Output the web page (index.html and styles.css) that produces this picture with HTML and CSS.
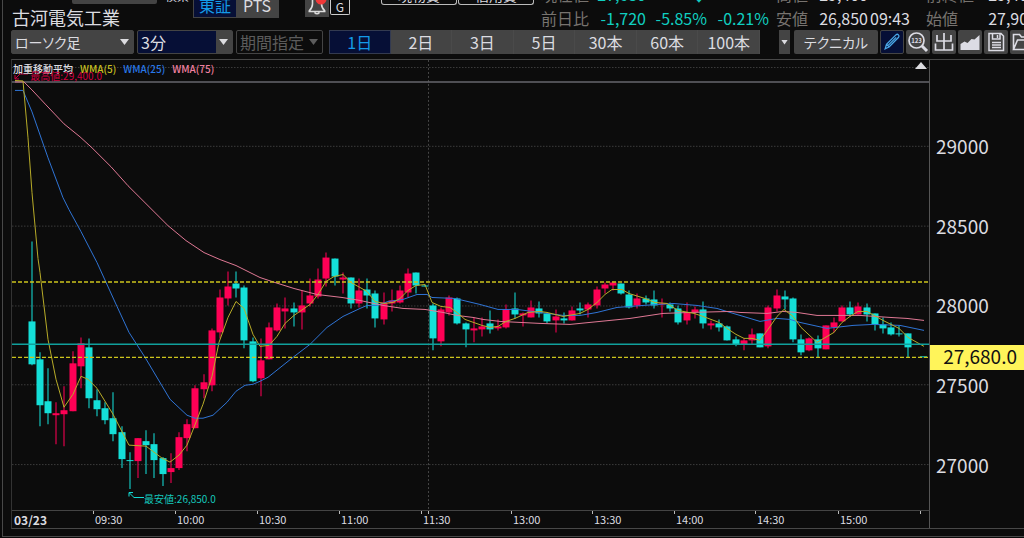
FILE: index.html
```
<!DOCTYPE html>
<html lang="ja">
<head>
<meta charset="utf-8">
<title>古河電気工業</title>
<link rel="stylesheet" href="styles.css">
</head>
<body>
<main class="window">
  <header class="header">
    <div class="ident">
      <div class="ident-strip"><span class="code-box"></span><span class="clipped">検索</span></div>
      <h1 class="name">古河電気工業</h1>
    </div>
    <div class="markets">
      <button class="market market-on">東証</button>
      <button class="market">PTS</button>
    </div>
    <button class="bell" aria-label="アラート">
      <svg viewBox="0 0 24 17" width="24" height="17"><path d="M7.500 0v4q0 4-3.500 7M16.500 0v4q0 4 3.500 7M3.500 11.500h17M9.500 12.500q2.500 2.500 5 0" fill="none" stroke="#ddd" stroke-width="1.600"/><circle cx="16" cy="-1" r="5.500" fill="#f03838"/></svg>
    </button>
    <button class="group">G</button>
    <div class="orders">
      <button class="order"><span>現物買</span></button>
      <button class="order"><span>信用買</span></button>
    </div>
    <div class="quotes">
      <span class="label">現在値</span><span class="num down">27,680</span><span class="num down">↓</span><span></span><span class="label second">高値</span><span class="num">29,400</span><span></span><span class="label third">前終値</span><span class="num">29,400</span>
      <span class="label">前日比</span><span class="num down">-1,720</span><span class="num down">-5.85%</span><span class="num down">-0.21%</span><span class="label second">安値</span><span class="num">26,850</span><span class="num">09:43</span><span class="label third">始値</span><span class="num">27,900</span>
    </div>
  </header>

  <nav class="toolbar">
    <div class="drop drop-type"><select aria-label="チャート種類"><option>ローソク足</option></select></div>
    <div class="drop drop-span"><select aria-label="足種"><option>3分</option></select></div>
    <div class="drop drop-range"><select aria-label="期間指定" disabled><option>期間指定</option></select></div>
    <div class="periods">
      <button class="period period-on">1日</button><button class="period">2日</button><button class="period">3日</button><button class="period">5日</button><button class="period">30本</button><button class="period">60本</button><button class="period">100本</button>
    </div>
    <button class="more" aria-label="その他"></button>
    <button class="technical">テクニカル</button>
    <div class="tools">
      <button class="tool tool-on" aria-label="描画"><svg viewBox="0 0 24 24"><path d="M4.500 19.500l1.500-5L16.500 4q1.300-1 2.500.2t.2 2.600L8.800 17.500zM6 14.500l3 3M7.500 16l9-9" fill="none" stroke="#4aa8e8" stroke-width="1.400"/></svg></button>
      <button class="tool" aria-label="数値照会"><svg viewBox="0 0 24 24"><circle cx="10.500" cy="10.500" r="7.500" fill="none" stroke="#dcdce4" stroke-width="1.700"/><path d="M16 16l5 5" stroke="#dcdce4" stroke-width="3"/><text x="10.500" y="13" text-anchor="middle" class="tiny">123</text></svg></button>
      <button class="tool" aria-label="出来高"><svg viewBox="0 0 24 24"><path d="M12 3v17M5 5v6h14V5M3.500 13.500V20h17v-6.500" fill="none" stroke="#dcdce4" stroke-width="1.700"/></svg></button>
      <button class="tool" aria-label="エリア"><svg viewBox="0 0 24 24"><path d="M2.500 20v-6l4-2.500 3 1.500 4-4 3 .5L21.500 5v15z" fill="#dcdce4"/></svg></button>
      <button class="tool" aria-label="保存"><svg viewBox="0 0 24 24"><path d="M5 3.500h12l2.500 2.500v14.500H5zM8.500 3.500V9H16V3.500M13.500 5v3M8 12.500h9M8 15h9M8 17.500h9" fill="none" stroke="#dcdce4" stroke-width="1.500"/></svg></button>
      <button class="tool" aria-label="開く"><svg viewBox="0 0 24 24"><path d="M3.500 19.500V4.500h6l2 2.500h9v3M3.500 19.500l4-9.500H23l-4 9.500z" fill="none" stroke="#dcdce4" stroke-width="1.600"/></svg></button>
    </div>
  </nav>

  <section class="panel">
    <div class="plot">
      <svg id="chart" class="chart" viewBox="12 60 917 451" preserveAspectRatio="none" role="img" aria-label="3分足チャート"></svg>
      <div class="legend"><span>加重移動平均</span><span class="wma5">WMA(5)</span><span class="wma25">WMA(25)</span><span class="wma75">WMA(75)</span></div>
      <span class="mark-high">最高値:29,400.0</span>
      <span class="mark-low">最安値:26,850.0</span>
      <button class="collapse" aria-label="折りたたむ"></button>
    </div>
    <div class="prices" id="prices"><span class="last">27,680.0</span></div>
    <div class="times" id="times"><b class="date">03/23</b></div>
    <div class="corner"></div>
  </section>
</main>
<script src="chart.js"></script>
</body>
</html>
```
FILE: styles.css
```
* { box-sizing: border-box; }
body {
  margin: 0;
  background: #0a0a0a;
  color: #dcdce0;
  font: 16px/22px "Noto Sans CJK JP", "Noto Sans", sans-serif;
  overflow: hidden;
}
button, select {
  font: inherit;
  color: inherit;
  border: 0;
  margin: 0;
  padding: 0;
  background: #444;
  white-space: nowrap;
}
.window {
  display: flex;
  flex-direction: column;
  height: calc(100vh - 1px);
  margin-left: 2px;
  border-left: 1px solid #484848;
  border-bottom: 1px solid #484848;
  background: #0c0c0c;
}

.header {
  display: flex;
  align-items: flex-start;
  height: 30px;
  padding-left: 9px;
  overflow: hidden;
  flex: none;
}
.ident { width: 181px; flex: none; }
.ident-strip {
  display: flex;
  align-items: flex-end;
  gap: 8px;
  height: 4px;
  padding-left: 60px;
  overflow: hidden;
}
.code-box { width: 85px; height: 8px; background: #444; border-radius: 2px; flex: none; }
.clipped { font-size: 12px; line-height: 16px; height: 16px; }
.name { margin: 2px 0 0; font-size: 18px; line-height: 22px; font-weight: 400; }
.markets { display: flex; width: 86px; height: 18px; border: 1px solid #444; border-top: 0; flex: none; }
.market { flex: 1; height: 17px; line-height: 11px; padding-bottom: 6px; }
.market-on { background: #060f36; color: #149be8; }
.bell { width: 24px; height: 17px; margin-left: 26px; flex: none; }
.bell svg { display: block; }
.group {
  width: 20px;
  height: 15px;
  margin-left: 1px;
  border: 1px solid #ccc;
  border-top: 0;
  border-radius: 0 0 2px 2px;
  background: transparent;
  font-size: 12px;
  line-height: 12px;
  flex: none;
}
.orders { display: flex; gap: 1px; margin-left: 31px; flex: none; }
.order {
  display: flex;
  align-items: flex-end;
  justify-content: center;
  width: 76px;
  height: 5px;
  border: 1px solid #bbb;
  border-top: 0;
  border-radius: 0 0 3px 3px;
  background: transparent;
  overflow: hidden;
}
.order span { font-size: 14px; line-height: 14px; height: 16px; }
.quotes {
  display: grid;
  grid-template-columns: 54px 51px 61px 62px 44px 55px 42px 64px 63px;
  row-gap: 2px;
  margin: -17px 0 0 7px;
  line-height: 22px;
  flex: none;
}
.label { color: #77736f; }
.second { padding-left: 7px; }
.third { padding-left: 16px; }
.num { text-align: right; }
.down { color: #10cfc0; }

.toolbar {
  display: flex;
  height: 24px;
  margin-left: 8px;
  flex: none;
  overflow: hidden;
}
.drop { position: relative; margin-right: 3px; flex: none; }
.drop select {
  appearance: none;
  width: 100%;
  height: 24px;
  padding-left: 3px;
  border-radius: 2px;
  border: 1px solid #444;
}
.drop::after {
  content: "";
  position: absolute;
  right: 5px;
  top: 9px;
  width: 9px;
  height: 6px;
  background: #dcdce0;
  clip-path: polygon(0 0, 100% 0, 50% 100%);
  pointer-events: none;
}
.drop-type { width: 123px; }
.drop-type select { font-size: 14px; font-feature-settings: "palt"; }
.drop-span { width: 96px; }
.drop-span select { background: linear-gradient(to left, #444 16px, #060f36 16px); }
.drop-range { width: 87px; margin-right: 6px; }
.drop-range select { background: #0c0c0c; color: #5c5c5c; opacity: 1; }
.drop-range::after { background: #5c5c5c; }
.periods { display: grid; grid-template-columns: repeat(7, 1fr); width: 431px; flex: none; }
.period { border-right: 1px solid #4a4a4a; }
.period-on { background: #060f36; color: #149be8; border: 1px solid #333a50; }
.more { width: 11px; margin-left: 19px; flex: none; }
.more::after {
  content: "";
  display: block;
  width: 7px;
  height: 5px;
  margin: 0 auto;
  background: #dcdce0;
  clip-path: polygon(0 0, 100% 0, 50% 100%);
}
.technical { width: 84px; margin: 0 2px 0 4px; border-radius: 2px; font-size: 14px; font-feature-settings: "palt"; flex: none; }
.tools { display: flex; gap: 2px; flex: 1 0 auto; }
.tool { width: 24px; height: 24px; border-radius: 2px; overflow: hidden; flex: none; }
.tool svg { display: block; width: 24px; height: 24px; }
.tool-on { background: #060f36; border: 1px solid #444; }
.tool-on svg { width: 22px; height: 22px; }
.tiny { font-size: 6px; font-weight: 700; fill: #dcdce4; }

.panel {
  display: grid;
  grid-template-columns: 1fr 94px;
  grid-template-rows: 1fr 17px;
  flex: 1;
  min-height: 0;
  margin: 5px 0 7px 8px;
  border: 1px solid #484848;
  border-left-color: #333;
  border-right: 0;
}
.plot { position: relative; min-height: 0; border-right: 1px solid #555; border-bottom: 1px solid #444; }
.chart { position: absolute; inset: 0; width: 100%; height: 100%; }
.legend {
  position: absolute;
  left: 1px;
  top: 2px;
  display: flex;
  gap: 7px;
  font-size: 10px;
  line-height: 14px;
  font-weight: 500;
}
.wma5 { color: #c8c020; }
.wma25 { color: #2878e8; }
.wma75 { color: #f080a0; }
.mark-high, .mark-low { position: absolute; font-size: 10px; line-height: 12px; }
.mark-high { left: 2%; top: 10px; color: #d00040; }
.mark-low { left: 14.4%; top: 96.2%; color: #14c8bc; }
.collapse {
  position: absolute;
  right: 2px;
  top: 2px;
  width: 12px;
  height: 7px;
  background: #dcdce0;
  clip-path: polygon(50% 0, 100% 100%, 0 100%);
}
.prices { position: relative; font-size: 19px; line-height: 22px; }
.price { position: absolute; left: 6px; transform: translateY(-50%); }
.last {
  position: absolute;
  z-index: 1;
  left: 0;
  right: 0;
  top: 63.2%;
  padding: 0 7px 3px 0;
  text-align: right;
  background: #fff45a;
  color: #111;
}
.times { position: relative; font-size: 11px; line-height: 17px; border-right: 1px solid #555; }
.date { padding-left: 2px; font-size: 12px; }
.time { position: absolute; top: 0; padding-left: 2px; }
.time::before { content: ""; position: absolute; left: 0; top: 0; width: 1px; height: 3px; background: #bbb; }
.time-major::before { display: none; }
```
FILE: chart.js
```
const TEAL = "#14dfd8", RED = "#ff0055";
const PITCH = 8.187, FIRST_X = 31.6;

// high, body top, body bottom, low, direction
const candles = `242 322 365 366 T|353 360 406 427 T|369 402 414 425 T|403 414 416 445 R|387 411 415 447 R|352 364 412 412 R|338 344 367 389 R|339 348 399 409 T|390 401 410 417 T|403 409 421 425 T|393 419 435 442 T|427 433 460 469 T|453 461 462 490 T|439 439 462 479 R|431 442 446 475 T|434 445 461 479 T|458 459 475 487 T|454 469 473 484 R|433 438 469 471 R|420 425 439 452 R|386 389 429 429 R|375 383 390 399 R|329 331 386 392 R|290 298 333 339 R|272 287 299 306 R|272 284 289 298 T|286 288 341 349 T|338 342 382 383 T|339 361 379 397 R|323 328 360 360 R|304 308 331 332 R|298 309 312 329 R|303 309 313 327 T|291 306 313 330 R|279 296 304 307 R|269 280 297 299 R|253 258 279 287 R|259 259 277 286 T|273 278 280 294 R|278 278 304 309 T|279 291 304 308 R|279 290 296 309 T|291 294 319 328 T|293 303 320 325 R|290 301 304 312 R|286 291 303 304 R|269 274 293 298 R|273 273 286 294 T|285 286 287 287 T|304 306 339 351 T|308 310 342 347 R|296 298 313 316 R|298 299 324 325 T|323 324 330 348 T|318 329 331 343 R|318 327 330 337 R|311 324 330 334 T|320 327 329 331 R|305 310 328 329 R|293 309 315 319 T|313 314 316 327 R|301 308 318 318 R|302 309 314 318 T|313 314 322 324 T|310 317 321 333 R|313 319 321 324 T|307 311 321 321 R|303 309 311 315 T|303 305 310 318 R|287 290 306 309 R|283 285 289 294 R|282 283 286 291 R|284 284 294 295 T|291 295 308 309 T|294 299 306 309 R|296 299 303 305 T|291 300 306 309 T|299 304 305 318 R|303 305 309 312 T|306 309 323 325 T|303 313 321 325 R|307 310 313 319 R|302 310 324 329 T|321 324 326 330 R|320 324 328 332 T|326 327 341 341 T|337 340 345 347 T|339 341 345 351 R|329 335 341 345 R|334 334 348 348 T|306 308 347 349 R|290 296 309 312 R|291 297 300 310 T|298 299 340 343 T|335 340 353 356 T|338 339 351 352 R|336 340 349 358 T|326 326 350 350 R|318 323 328 333 R|306 308 322 322 R|302 308 315 317 T|303 307 315 315 R|304 308 315 322 T|314 314 325 331 T|318 325 329 334 T|323 328 335 336 T|326 334 335 337 T|334 334 348 358 T`
  .split("|").map(s => s.split(" "));

const wma75 = "15,82 24,82 32,90 46,105 64,124 80,137 92,148 111,167 128,186 149,207 168,226 186,241 204,253 220,260 236,266 260,278 275,283 294,289 317,295 342,298 360,301 383,306 403,309 425,310 443,313 457,316 473,318 483,320 500,322 540,324 570,325 590,323 630,319 663,314 690,313 730,312 740,313 767,314 783,312 797,313 817,316 860,316 890,318 907,319 924,321";
const wma25 = "15,90.5 23,90.5 32,112 48,158 63,198 69,210 81,232 97,263 117,307 129,333 145,358 170,400 187,416 195,419 203,419 213,416 227,403 236,392 245,386 253,385 260,382 268,378 293,358 310,345 327,328 343,317 360,309 367,306 377,306 388,302 403,300 417,295 427,295 432,298 455,299 480,305 498,310 517,310 540,313 563,316 580,316 597,313 617,308 643,306 673,304 697,306 717,309 730,313 760,322 777,319 790,320 800,323 827,329 853,326 873,325 900,326 924,331";
const wma5 = "15,80.5 23,81 28,138 32,193 38,259 40,273 48,340 56,380 64,408 73,395 81,377 88,380 97,389 113,415 129,446 146,447 162,459 170,463 179,456 187,446 203,405 212,377 219,343 228,318 236,302 244,309 253,335 260,347 269,346 277,337 285,324 294,316 310,305 318,295 326,282 334,277 343,275 351,283 360,288 367,292 375,302 384,304 393,303 400,299 408,291 416,286 425,285 432,303 441,307 450,308 457,313 465,320 482,326 490,328 498,327 506,322 515,319 528,313 540,312 547,313 563,317 580,314 588,310 597,303 605,295 612,290 622,290 629,294 645,299 655,303 667,304 678,311 694,314 703,317 719,323 727,329 736,335 744,339 752,339 760,341 768,330 777,317 784,310 793,317 801,328 817,343 834,333 842,323 850,317 858,312 867,312 883,321 899,329 908,338 924,347";

const line = (x1, y1, x2, y2, stroke, extra = "") =>
  `<line x1="${x1}" y1="${y1}" x2="${x2}" y2="${y2}" stroke="${stroke}" ${extra}/>`;
const curve = (points, stroke) =>
  `<polyline points="${points}" fill="none" stroke="${stroke}" stroke-width="1"/>`;

let out = "";
for (const y of [67.5, 146.5, 226.5, 306.5, 385.5, 465.5]) {
  out += line(12, y, 929, y, "#3c3c3c", 'stroke-dasharray="1.500 1.500"');
}
out += line(428.5, 60, 428.5, 511, "#464646", 'stroke-dasharray="2 2"');
out += line(12, 82, 929, 82, "#66666c", 'stroke-width="1.500"');

candles.forEach(([high, top, bottom, low, dir], i) => {
  const x = Math.round(FIRST_X + i * PITCH);
  const color = dir === "T" ? TEAL : RED;
  out += line(x, high, x, low, color, 'stroke-width="1.300" opacity="0.8"');
  out += `<rect x="${x - 3.5}" y="${top}" width="7" height="${Math.max(1, bottom - top)}" fill="${color}"/>`;
});
out += `<rect x="920" y="357" width="7" height="1" fill="${TEAL}"/>`;

out += curve(wma25, "#2f74d6") + curve(wma75, "#e07895") + curve(wma5, "#b8ac28");
out += line(12, 345, 929, 345, "#10a09c", 'stroke-width="1.500"');
for (const y of [282.5, 358]) {
  out += line(12, y, 929, y, "#ccc41c", 'stroke-width="1.300" stroke-dasharray="4 2"');
}
out += `<path d="M28 74h-8l-5 5m0-4v4h4" fill="none" stroke="#d00040"/>`;
out += `<path d="M144 498.500h-10l-5-5m0 4v-4h4" fill="none" stroke="${TEAL}"/>`;
document.getElementById("chart").innerHTML = out;

const prices = document.getElementById("prices");
[[29000, 146], [28500, 226], [28000, 305], [27500, 385], [27000, 465]].forEach(([value, y]) => {
  prices.insertAdjacentHTML("beforeend", `<span class="price" style="top:${(y - 60) / 4.51}%">${value}</span>`);
});

const times = document.getElementById("times");
const addTime = (label, x, name = "time") =>
  times.insertAdjacentHTML("beforeend", `<span class="${name}" style="left:${(x - 12) / 9.17}%">${label}</span>`);
[["09:30", 93], ["10:00", 175], ["10:30", 257], ["11:00", 339], ["11:30", 421], ["", 428], ["13:00", 511], ["13:30", 592], ["14:00", 674], ["14:30", 755], ["15:00", 838], ["", 920]]
  .forEach(([label, x]) => addTime(label, x));
```
